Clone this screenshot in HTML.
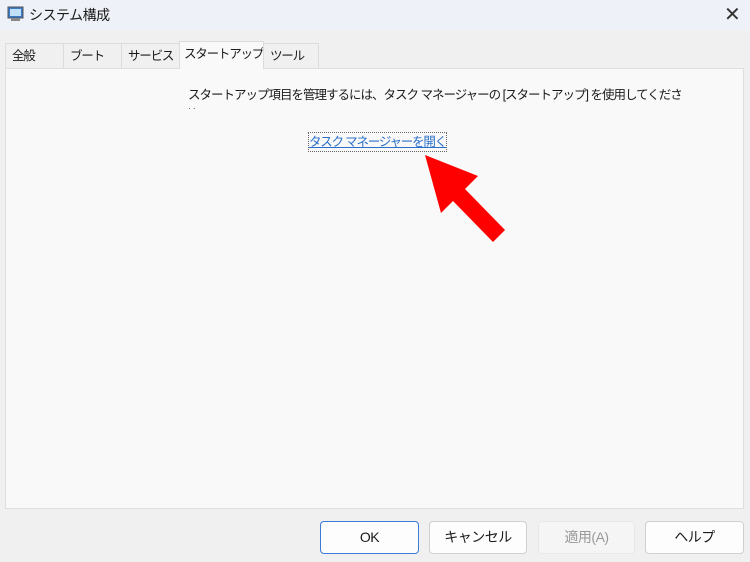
<html><head><style>
body{margin:0;width:750px;height:562px;background:#f0f0f0;font-family:"Liberation Sans","Noto Sans CJK JP",sans-serif;position:relative;overflow:hidden;font-size:13px;color:#1a1a1a}
.a{position:absolute}
.tab{position:absolute;top:43px;height:25px;line-height:25px;border:1px solid #dcdcdc;border-bottom:none;background:#f0f0f0;font-size:12.5px;letter-spacing:-1.2px;padding-left:6px;box-sizing:border-box;white-space:nowrap;overflow:hidden}
.btn{position:absolute;top:521px;height:33px;border:1px solid #d0d0d0;border-radius:4px;background:#fdfdfd;text-align:center;line-height:31px;font-size:14px;box-sizing:border-box;letter-spacing:-0.5px}
</style></head><body>
<div class="a" style="left:0;top:0;width:750px;height:30px;background:#eef1f7"></div>
<svg class="a" style="left:7px;top:6px" width="18" height="16"><rect x="1" y="1" width="15" height="11" fill="#3a78c8" stroke="#555"/><rect x="3" y="3" width="11" height="7" fill="#bfe0f8"/><rect x="4" y="12" width="9" height="3" fill="#888"/></svg>
<div class="a" style="left:29px;top:5px;font-size:14px;letter-spacing:-0.5px">システム構成</div>
<div class="a" style="left:724px;top:2px;font-size:20px;color:#333">✕</div>
<div class="tab" style="left:5px;width:59px">全般</div>
<div class="tab" style="left:63px;width:59px">ブート</div>
<div class="tab" style="left:121px;width:59px">サービス</div>
<div class="tab" style="left:263px;width:56px">ツール</div>
<div class="a" style="left:5px;top:68px;width:739px;height:441px;background:#f9f9f9;border:1px solid #dedede;box-sizing:border-box"></div>
<div class="tab" style="left:179px;width:85px;top:41px;height:28px;background:#f9f9f9;z-index:2;padding-left:4px">スタートアップ</div>
<div class="a" style="left:188px;top:84px;font-size:12.5px;letter-spacing:-1px;white-space:nowrap">スタートアップ項目を管理するには、タスク マネージャーの [スタートアップ] を使用してくださ</div>
<div class="a" style="left:188px;top:104px;font-size:8px">· ·</div>
<div class="a" style="left:308px;top:132px;height:18px;border:1px dotted #666;color:#2a6fc9;text-decoration:underline;font-size:12.5px;letter-spacing:-1.2px;line-height:18px;white-space:nowrap">タスク マネージャーを開く</div>
<svg class="a" style="left:0;top:0" width="750" height="562"><polygon points="425,155 478,176 465,189 505,230 493,242 453,201 441,213" fill="#f00"/></svg>
<div class="btn" style="left:320px;width:99px;border-color:#3a7bd5">OK</div>
<div class="btn" style="left:429px;width:98px">キャンセル</div>
<div class="btn" style="left:538px;width:97px;background:#f5f5f5;border-color:#e8e8e8;color:#999">適用(A)</div>
<div class="btn" style="left:645px;width:99px">ヘルプ</div>
</body></html>
